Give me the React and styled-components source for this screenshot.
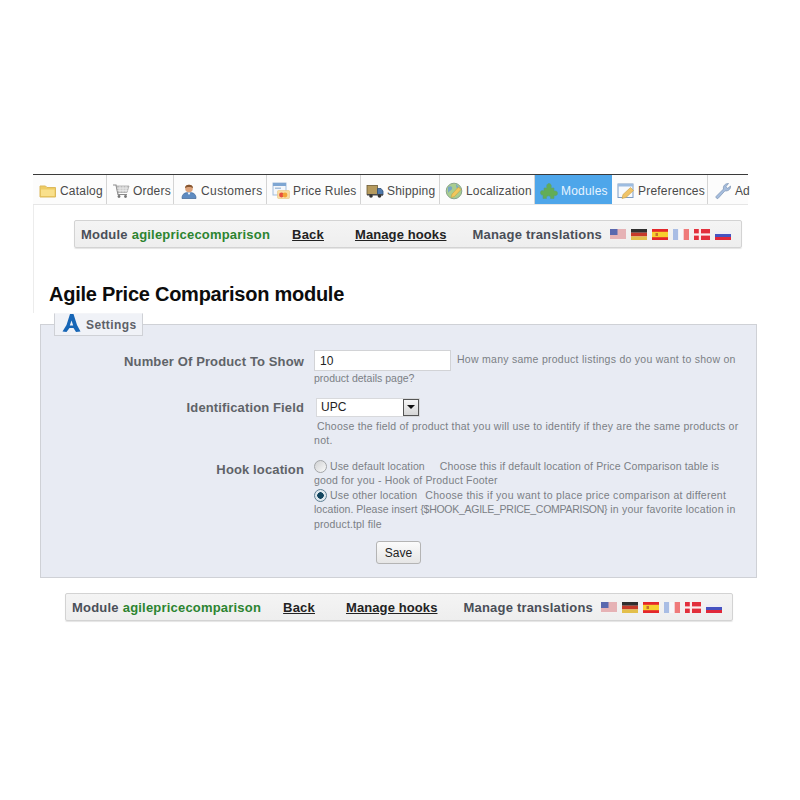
import React from "react";
import styled, { createGlobalStyle } from "styled-components";

const Global = createGlobalStyle`
  html, body { margin: 0; padding: 0; background: #fff; }
  body { font-family: "Liberation Sans", Arial, sans-serif; width: 800px; height: 800px; overflow: hidden; }
`;

const Page = styled.div`
  padding-top: 174px;
  height: 626px;
  display: flex;
  flex-direction: column;
`;
const TopSection = styled.div`
  margin-left: 33px;
  width: 715px;
  height: 139px;
  border-left: 1px solid #ececec;
  box-sizing: border-box;
  display: flex;
  flex-direction: column;
`;
const Tabs = styled.nav`
  display: flex;
  height: 31px;
  box-sizing: border-box;
  border-top: 1px solid #3a3a3a;
  border-bottom: 1px solid #e6e6e6;
  background: #fcfcfc;
  margin-left: -1px;
`;
const Tab = styled.a`
  width: ${p => p.$w}px;
  flex: none;
  box-sizing: border-box;
  display: flex;
  align-items: center;
  gap: 3px;
  padding: 2px 0 0 ${p => p.$pad || 5}px;
  font-size: 12px;
  letter-spacing: ${p => p.$ls ?? 0.2}px;
  white-space: nowrap;
  color: ${p => (p.$active ? "#e8f4ff" : "#4a4a4a")};
  background: ${p => (p.$active ? "#4ea6ea" : "transparent")};
  border-right: 1px solid ${p => (p.$plain ? "transparent" : "#d4d4d4")};
`;
const IconBox = styled.svg`
  width: 18px;
  height: 18px;
  flex: none;
`;
const ModuleBar = styled.div`
  margin-left: ${p => p.$left}px;
  margin-top: ${p => p.$top}px;
  width: 668px;
  height: 28px;
  box-sizing: border-box;
  display: flex;
  align-items: center;
  padding-left: 6px;
  background: linear-gradient(#f4f4f4, #eeeeee);
  border: 1px solid #d3d3d3;
  border-radius: 2px;
  box-shadow: 0 1px 1px #e4e4e4;
  font-size: 13px;
  font-weight: bold;
  letter-spacing: 0.2px;
  color: #4a4f58;
  white-space: nowrap;
`;
const ModuleName = styled.span`
  color: #2c8430;
  margin-left: 4px;
`;
const BarLink = styled.a`
  color: #222;
  text-decoration: underline;
  margin-left: ${p => p.$ml}px;
  letter-spacing: ${p => p.$ls ?? 0.2}px;
`;
const BarLabel = styled.span`
  margin-left: 26px;
`;
const Flags = styled.span`
  display: inline-flex;
  gap: 5px;
  margin-left: 8px;
`;
const FlagSvg = styled.svg`
  width: 16px;
  height: 11px;
  display: block;
`;
const Title = styled.h1`
  margin: 34px 0 0 15px;
  font-size: 20px;
  line-height: 24px;
  font-weight: bold;
  letter-spacing: -0.25px;
  color: #0c0c0c;
`;
const Panel = styled.fieldset`
  margin: 0 0 0 40px;
  width: 717px;
  min-width: 0;
  height: 265px;
  box-sizing: border-box;
  padding: 0;
  background: #e8ebf3;
  border: 1px solid #cfd1d6;
`;
const Legend = styled.legend`
  margin: 0 0 -3px 13px;
  padding: 0;
  width: 89px;
  height: 23px;
  box-sizing: border-box;
  background: #f0f2f7;
  border: 1px solid #cfd1d6;
  border-top: 1px solid #f4f5f8;
  display: flex;
  align-items: center;
  font-size: 12px;
  font-weight: bold;
  color: #5d6168;
  letter-spacing: 0.4px;
`;
const LogoSvg = styled.svg`
  width: 19px;
  height: 19px;
  margin: -3px 5px 0 7px;
  flex: none;
`;
const Row = styled.div`
  display: grid;
  grid-template-columns: 263px 1fr;
  column-gap: 10px;
  margin-top: ${p => p.$mt}px;
`;
const Label = styled.label`
  text-align: right;
  font-size: 13px;
  font-weight: bold;
  letter-spacing: 0.13px;
  color: #5f6368;
  padding-top: ${p => p.$pt}px;
  white-space: nowrap;
`;
const Field = styled.div`
  font-size: 10.5px;
  line-height: 14.5px;
  letter-spacing: 0.33px;
  color: #7b7f85;
  white-space: nowrap;
`;
const FieldLine = styled.div`
  display: flex;
  align-items: flex-start;
`;
const InlineHint = styled.span`
  margin-left: 6px;
  padding-top: 2px;
  letter-spacing: 0.27px;
`;
const TextInput = styled.input`
  width: 137px;
  height: 21px;
  box-sizing: border-box;
  border: 1px solid #d2d3d6;
  background: #fff;
  padding: 1px 5px 0;
  font: 12px "Liberation Sans", Arial, sans-serif;
  color: #222;
  outline: none;
`;
const Hint = styled.div`
  margin-top: ${p => p.$mt || 0}px;
  padding-left: ${p => p.$pl || 0}px;
  letter-spacing: ${p => p.$ls ?? 0.33}px;
`;
const Tight = styled.span`
  letter-spacing: ${p => p.$ls}px;
`;
const SelectWrap = styled.div`
  margin-left: 2px;
  width: 104px;
  height: 19px;
  box-sizing: border-box;
  display: flex;
  align-items: stretch;
  background: #fff;
  border: 1px solid #d8d9dc;
`;
const Select = styled.select`
  appearance: none;
  flex: 1;
  min-width: 0;
  border: none;
  outline: none;
  background: #fff;
  padding: 0 0 0 4px;
  font: 12px "Liberation Sans", Arial, sans-serif;
  color: #222;
`;
const ArrowBtn = styled.span`
  width: 16px;
  flex: none;
  box-sizing: border-box;
  display: flex;
  align-items: center;
  justify-content: center;
  background: linear-gradient(#f6f6f6, #d6d6d6);
  border: 1px solid #555;
  &::after {
    content: "";
    border-left: 4px solid transparent;
    border-right: 4px solid transparent;
    border-top: 4px solid #111;
  }
`;
const Radio = styled.span`
  display: inline-block;
  width: 13px;
  height: 13px;
  box-sizing: border-box;
  border-radius: 50%;
  border: 1px solid ${p => (p.$on ? "#5f7f93" : "#a3a5a8")};
  background: ${p =>
    p.$on
      ? "radial-gradient(circle, #12455f 0 3px, #dfe8ee 3.5px)"
      : "linear-gradient(135deg, #d0d1d3, #fafafa)"};
  vertical-align: -3px;
  margin-right: 3px;
`;
const Gap = styled.span`
  display: inline-block;
  width: ${p => p.$w}px;
`;
const SaveRow = styled.div`
  margin: 10px 0 0 335px;
`;
const SaveButton = styled.button`
  width: 45px;
  height: 23px;
  padding: 0;
  box-sizing: border-box;
  border: 1px solid #b4b4b4;
  border-radius: 3px;
  background: linear-gradient(#fbfbfb, #e6e6e6);
  font: 12px "Liberation Sans", Arial, sans-serif;
  color: #222;
`;

const I = ({ children }) => <IconBox viewBox="0 0 18 18">{children}</IconBox>;

const Folder = () => (
  <I>
    <path d="M1 4H6.500L8 5.500H16.500V15H1Z" fill="#eecb62" stroke="#dcb95c" strokeWidth="1" />
    <path d="M2 7.500H15.500V14H2Z" fill="#f9e08c" />
  </I>
);
const Cart = () => (
  <I>
    <path d="M1 3H4L6 12.500H15" fill="none" stroke="#8a8a8a" strokeWidth="1.200" />
    <path d="M4.500 4H17L15 10.500H6Z" fill="#c9c9c9" stroke="#9a9a9a" strokeWidth="0.700" />
    <path d="M5 6.200H16.300M5.500 8.400H15.600M8 4V10.500M11 4V10.500M14 4V10.500" stroke="#efefef" strokeWidth="0.700" />
    <circle cx="7" cy="14.500" r="1.400" fill="#777" />
    <circle cx="13.500" cy="14.500" r="1.400" fill="#777" />
  </I>
);
const Person = () => (
  <I>
    <path d="M2 16.500C2 11.500 5 10.500 9 10.500S16 11.500 16 16.500Z" fill="#5f8cc2" stroke="#3f6595" strokeWidth="0.700" />
    <circle cx="9" cy="6.500" r="3.800" fill="#dca27a" />
    <path d="M5 6C4.500 1.500 13.500 1.500 13 6C11 4.500 7 4.500 5 6Z" fill="#85552f" />
    <path d="M7.500 10.500L9 13L10.500 10.500Z" fill="#fff" />
  </I>
);
const PriceRules = () => (
  <I>
    <rect x="1" y="1" width="13" height="12" fill="#f4f7fb" stroke="#a3bedc" />
    <rect x="1" y="1" width="13" height="3" fill="#7ea6d2" />
    <rect x="3" y="5.500" width="6" height="1.500" fill="#a7c0da" />
    <rect x="5.500" y="8.500" width="12" height="8" rx="1" fill="#f8dca2" stroke="#e7bd6e" strokeWidth="0.500" />
    <circle cx="9.500" cy="13" r="2.400" fill="#e8503f" />
    <circle cx="13" cy="13" r="2.400" fill="#f3a437" />
  </I>
);
const Truck = () => (
  <I>
    <rect x="1" y="3.500" width="10.500" height="9" fill="#b59a5e" stroke="#6c5a34" strokeWidth="0.800" />
    <path d="M11.500 6.500H15L17 9V13H11.500Z" fill="#4f79ac" stroke="#2f4f78" strokeWidth="0.800" />
    <rect x="1" y="12" width="16" height="1.500" fill="#4a4a4a" />
    <circle cx="5" cy="14" r="1.800" fill="#333" />
    <circle cx="13.500" cy="14" r="1.800" fill="#333" />
  </I>
);
const Globe = () => (
  <I>
    <circle cx="9" cy="9" r="7.800" fill="#a9cd8f" stroke="#8aa68d" strokeWidth="1" />
    <path d="M3 5C6 3 8 5 7 7S3 9 3 12M11 2C13 5 15 5 16 8C13 8 11 7 11 2Z" fill="#78a7c4" />
    <path d="M6 15.500L7 12L13.500 5L16 7.500L9.500 14.500Z" fill="#f2c75c" stroke="#c19a3c" strokeWidth="0.500" />
  </I>
);
const Puzzle = () => (
  <I>
    <path d="M4 6H7C6 3 7.500 1.500 9 1.500S12 3 11 6H14V9C17 8.500 17.500 10 17.500 11.500S16 14 14 13.500V16.500H10.500C11 14.500 9.500 13.800 8.500 13.800S6 14.500 6.500 16.500H3V13C1 13.500 .5 12 .5 10.500S2 8 4 9Z" fill="#62ad57" stroke="#5c9f78" strokeWidth="0.600" />
  </I>
);
const Prefs = () => (
  <I>
    <rect x="1" y="2" width="15" height="13.500" fill="#f7f9fc" stroke="#7c9cc4" />
    <rect x="1" y="2" width="15" height="2.500" fill="#9dbce0" />
    <path d="M5 16.500L6 12.500L13.500 5.500L16.500 8.500L9 15.500Z" fill="#f0c468" stroke="#c99f46" strokeWidth="0.600" />
  </I>
);
const Wrench = () => (
  <I>
    <path d="M2 14.500L9.500 7C8.800 4 11 1.500 14.500 1.500L12 4.500L13.500 6.500L16.500 4C17 7.500 13.500 9.500 11 8.800L4 16.500C3 17 1.500 15.500 2 14.500Z" fill="#a6bddd" stroke="#7890b2" strokeWidth="0.700" />
  </I>
);

const Flag = ({ children }) => <FlagSvg viewBox="0 0 16 11" preserveAspectRatio="none">{children}</FlagSvg>;
const FlagSet = () => (
  <Flags>
    <Flag>
      <rect width="16" height="11" fill="#f4f0f0" />
      <path d="M0 1H16M0 3H16M0 5H16M0 7H16M0 9H16" stroke="#d8757a" strokeWidth="1" />
      <rect width="7.500" height="6" fill="#5a68ae" />
    </Flag>
    <Flag>
      <rect width="16" height="3.700" fill="#2f2f2f" />
      <rect y="3.700" width="16" height="3.700" fill="#c63a2a" />
      <rect y="7.400" width="16" height="3.600" fill="#e3bf4a" />
    </Flag>
    <Flag>
      <rect width="16" height="11" fill="#e4262a" />
      <rect y="2.800" width="16" height="5.400" fill="#f7cf2e" />
      <rect x="3.500" y="4" width="2.500" height="3" fill="#c8702c" />
    </Flag>
    <Flag>
      <rect width="5.300" height="11" fill="#a9bde4" />
      <rect x="5.300" width="5.400" height="11" fill="#f7f7f9" />
      <rect x="10.700" width="5.300" height="11" fill="#ef7a7a" />
    </Flag>
    <Flag>
      <rect width="16" height="11" fill="#e2303c" />
      <rect x="4.800" width="2.200" height="11" fill="#fbeeee" />
      <rect y="4.400" width="16" height="2.200" fill="#fbeeee" />
    </Flag>
    <Flag>
      <rect y="2" width="16" height="3" fill="#eeeef6" />
      <rect y="5" width="16" height="3" fill="#4652c0" />
      <rect y="8" width="16" height="3" fill="#e0283a" />
    </Flag>
  </Flags>
);

const Bar = ({ left, top }) => (
  <ModuleBar $left={left} $top={top}>
    Module<ModuleName>agilepricecomparison</ModuleName>
    <BarLink $ml={22}>Back</BarLink>
    <BarLink $ml={31} $ls={0.1}>Manage hooks</BarLink>
    <BarLabel>Manage translations</BarLabel>
    <FlagSet />
  </ModuleBar>
);

export default function App() {
  return (
    <Page>
      <Global />
      <TopSection>
        <Tabs>
          <Tab $w={74} $pad={6}><Folder />Catalog</Tab>
          <Tab $w={67}><Cart />Orders</Tab>
          <Tab $w={93} $pad={6} $ls={0.4}><Person />Customers</Tab>
          <Tab $w={94}><PriceRules />Price Rules</Tab>
          <Tab $w={79}><Truck />Shipping</Tab>
          <Tab $w={95}><Globe />Localization</Tab>
          <Tab $w={77} $active $plain><Puzzle />Modules</Tab>
          <Tab $w={96}><Prefs />Preferences</Tab>
          <Tab $w={40} $pad={6} $ls={0} $plain><Wrench />Ad</Tab>
        </Tabs>
        <Bar left={40} top={15} />
        <Title>Agile Price Comparison module</Title>
      </TopSection>
      <Panel>
        <Legend>
          <LogoSvg viewBox="0 0 19 19">
            <path fillRule="evenodd" d="M8 0H11.500L15 11L18.500 17.500L14 18L11.500 14H7.500L4.500 18L.5 17.500L4.500 11ZM9.500 6.500L7.800 11.500H11.200Z" fill="#1766b6" />
          </LogoSvg>
          Settings
        </Legend>
        <Row $mt={17}>
          <Label $pt={4}>Number Of Product To Show</Label>
          <Field>
            <FieldLine>
              <TextInput defaultValue="10" />
              <InlineHint>How many same product listings do you want to show on</InlineHint>
            </FieldLine>
            <Hint $ls={0}>product details page?</Hint>
          </Field>
        </Row>
        <Row $mt={12}>
          <Label $pt={2}>Identification Field</Label>
          <Field>
            <SelectWrap>
              <Select defaultValue="UPC"><option>UPC</option></Select>
              <ArrowBtn />
            </SelectWrap>
            <Hint $mt={2} $pl={3} $ls={0.22}>Choose the field of product that you will use to identify if they are the same products or</Hint>
            <Hint>not.</Hint>
          </Field>
        </Row>
        <Row $mt={11}>
          <Label $pt={3}>Hook location</Label>
          <Field>
            <Hint $ls={0.13}><Radio /><Tight $ls={0.13}>Use default location</Tight><Gap $w={15} />Choose this if default location of Price Comparison table is</Hint>
            <Hint $ls={0.2}>good for you - Hook of Product Footer</Hint>
            <Hint $ls={0.28}><Radio $on /><Tight $ls={0.15}>Use other location</Tight><Gap $w={8} />Choose this if you want to place price comparison at different</Hint>
            <Hint $ls={0.03}>location. Please insert <Tight $ls={-0.28}>{"{$HOOK_AGILE_PRICE_COMPARISON}"}</Tight> <Tight $ls={0.22}>in your favorite location in</Tight></Hint>
            <Hint $ls={0.14}>product.tpl file</Hint>
          </Field>
        </Row>
        <SaveRow><SaveButton>Save</SaveButton></SaveRow>
      </Panel>
      <Bar left={65} top={15} />
    </Page>
  );
}
